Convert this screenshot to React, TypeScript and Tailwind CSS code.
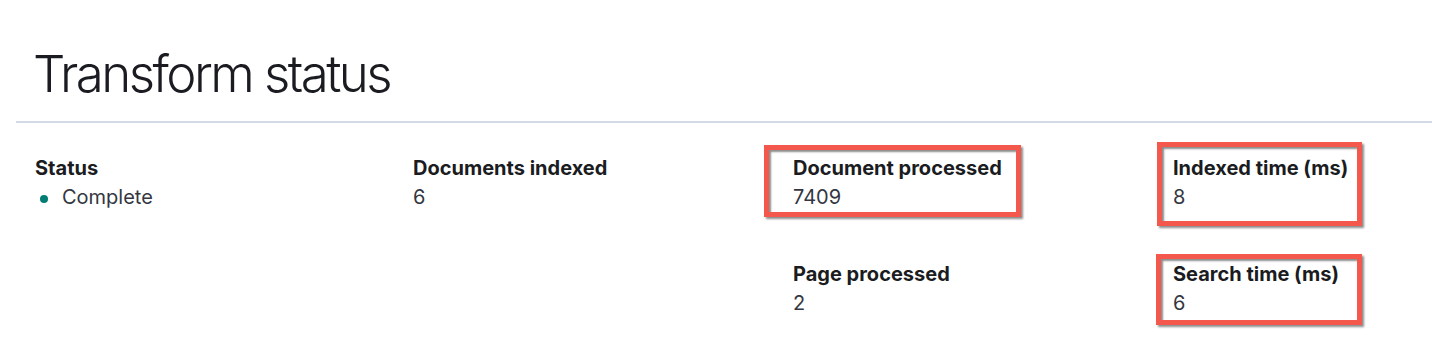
const items: { label: string; value: string }[][] = [
  [{ label: 'Status', value: 'Complete' }],
  [{ label: 'Documents indexed', value: '6' }],
  [
    { label: 'Document processed', value: '7409' },
    { label: 'Page processed', value: '2' },
  ],
  [
    { label: 'Indexed time (ms)', value: '8' },
    { label: 'Search time (ms)', value: '6' },
  ],
];

// annotation boxes drawn over the stats
const boxClass =
  'pointer-events-none absolute border-[5px] border-[#f4584c] shadow-[2px_2px_2px_rgba(0,0,0,0.45),inset_2px_2px_2px_rgba(0,0,0,0.45)]';

function Annotation({ label }: { label: string }) {
  if (label === 'Document processed') {
    return <div className={`${boxClass} left-[-29px] top-[-9px] w-[257px] h-[72px]`} />;
  }
  if (label === 'Indexed time (ms)') {
    return <div className={`${boxClass} left-[-16px] top-[-12px] w-[205px] h-[84px]`} />;
  }
  if (label === 'Search time (ms)') {
    return <div className={`${boxClass} left-[-17px] top-[-6px] w-[206px] h-[71px]`} />;
  }
  return null;
}

export default function App() {
  return (
    <div className="min-h-[361px] bg-white pl-4 font-['Inter',_'Liberation_Sans',_sans-serif] overflow-hidden">
      <div className="pl-[17px] pt-[43px]">
        <h1 className="text-[51px] leading-[61px] font-light text-[#1a1c21] tracking-[-2.55px]">Transform status</h1>
      </div>

      <div className="mt-[17px] h-[2px] bg-[#d3dae6]" />

      <div className="grid grid-cols-[378px_380px_380px_1fr] pl-[19px] pt-[31px]">
        {items.map((col, i) => (
          <div key={i} className="flex flex-col gap-[49px]">
            {col.map((item) => (
              <div key={item.label} className="relative h-[57px]">
                <div className="text-[20px] leading-[28px] font-bold text-[#1a1c21]">{item.label}</div>
                {item.label === 'Status' ? (
                  <div className="mt-px flex items-center text-[20px] leading-[28px] text-[#343741]">
                    <span className="ml-[5px] w-2 h-2 rounded-full bg-[#017d73] translate-y-[2px]" />
                    <span className="ml-[14px]">{item.value}</span>
                  </div>
                ) : (
                  <div className="mt-px text-[20px] leading-[28px] text-[#343741]">{item.value}</div>
                )}
                <Annotation label={item.label} />
              </div>
            ))}
          </div>
        ))}
      </div>
    </div>
  );
}
